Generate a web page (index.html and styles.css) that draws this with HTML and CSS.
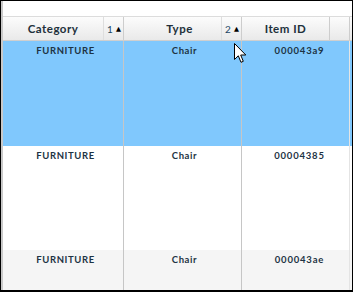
FILE: index.html
```html
<!DOCTYPE html>
<html>
<head>
<meta charset="utf-8">
<link rel="stylesheet" href="styles.css">
</head>
<body>
<div class="frame">
  <div class="gutter"></div>
  <div class="grid">
    <div class="topband"></div>
    <div class="head">
      <div class="hcell c1">
        <div class="hlabel">Category</div>
        <div class="sort"><span class="num">1</span><span class="tri">▲</span></div>
      </div>
      <div class="hcell c2">
        <div class="hlabel">Type</div>
        <div class="sort"><span class="num">2</span><span class="tri">▲</span></div>
      </div>
      <div class="hcell c3"><div class="hlabel">Item ID</div></div>
      <div class="hcell c4"></div>
    </div>
    <div class="row r1 selected">
      <div class="cell c1">FURNITURE</div>
      <div class="cell c2">Chair</div>
      <div class="cell c3b">000043a9</div>
    </div>
    <div class="row r2">
      <div class="cell c1">FURNITURE</div>
      <div class="cell c2">Chair</div>
      <div class="cell c3b">00004385</div>
    </div>
    <div class="row r3 alt">
      <div class="cell c1">FURNITURE</div>
      <div class="cell c2">Chair</div>
      <div class="cell c3b">000043ae</div>
    </div>
  </div>
  <svg class="cursor" width="13" height="21" viewBox="0 0 13 21">
    <path d="M0.5 0.5 L0.5 16.5 L4.3 12.8 L7 19.3 L9.3 18.3 L6.7 12 L11.8 12 Z" fill="#fff" stroke="#000" stroke-width="1" stroke-linejoin="miter"/>
  </svg>
</div>
</body>
</html>
```
FILE: styles.css
```css
html, body {
  margin: 0;
  padding: 0;
  background: #fff;
}
.frame {
  position: relative;
  width: 353px;
  height: 292px;
  box-sizing: border-box;
  border-top: 1px solid #000;
  border-left: 1px solid #000;
  border-right: 1px solid #000;
  border-bottom: 2px solid #000;
  display: flex;
  overflow: hidden;
  font-family: "Lato", "Liberation Sans", sans-serif;
  font-weight: 700;
  color: #1f3242;
}
.gutter {
  width: 2px;
  background: #c9c9c9;
  flex: none;
}
.grid {
  flex: 1;
  display: flex;
  flex-direction: column;
}
.topband {
  height: 15px;
  flex: none;
}
.head {
  height: 25px;
  box-sizing: border-box;
  border-top: 1px solid #dcdcdc;
  border-bottom: 1px solid #cfcfcf;
  background: linear-gradient(#fcfcfc, #e9e9e9);
  display: flex;
  flex: none;
}
.hcell {
  box-sizing: border-box;
  border-right: 1px solid #cdcdcd;
  display: flex;
  height: 100%;
}
.c1 { width: 121px; }
.c2 { width: 118px; }
.c3 { width: 88px; }
.c4 { width: 20px; }
.c3b { width: 108px; }
.hlabel {
  flex: 1;
  display: flex;
  align-items: center;
  justify-content: center;
  font-size: 11.5px;
  letter-spacing: 0.5px;
  color: #22303b;
  padding-bottom: 1px;
}
.c2 .hlabel { padding-left: 14px; }
.sort {
  width: 20px;
  box-sizing: border-box;
  border-left: 1px solid #dedede;
  display: flex;
  align-items: center;
  justify-content: space-between;
  padding: 1px 2px 0 3px;
}
.num {
  font-size: 10px;
  color: #1c4766;
  font-weight: 400;
}
.tri {
  font-size: 6.5px;
  color: #000;
  font-family: "DejaVu Sans", sans-serif;
}
.row {
  display: flex;
  flex: none;
}
.r1 { height: 105px; }
.r2 { height: 104px; }
.r3 { flex: 1; }
.selected { background: #80c8fd; }
.alt { background: #f5f5f5; }
.cell {
  box-sizing: border-box;
  border-right: 1px solid #c6c6c6;
  text-align: center;
  font-size: 9.5px;
  line-height: 12px;
  padding-top: 4px;
  letter-spacing: 0.6px;
  color: #1d3344;
}
.c1.cell { padding-left: 5px; }
.c2.cell { padding-left: 4px; }
.c3b.cell { border-right-color: #e4e4e4; padding-left: 8px; letter-spacing: 0.8px; }
.cursor {
  position: absolute;
  left: 233px;
  top: 42px;
}
```
